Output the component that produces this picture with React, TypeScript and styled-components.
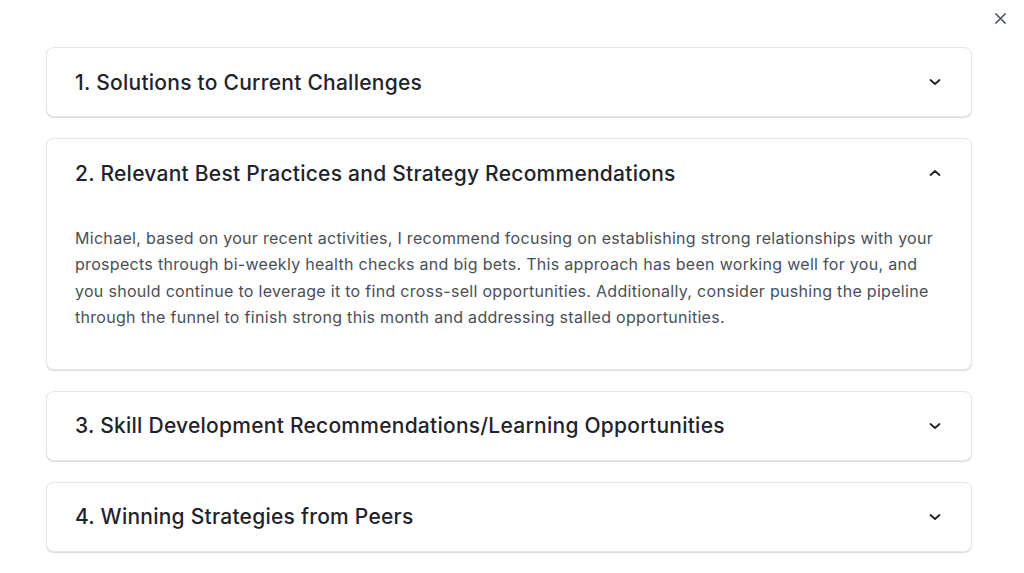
import React, { useState } from "react";
import styled, { createGlobalStyle } from "styled-components";

const GlobalStyle = createGlobalStyle`
	html, body {
		margin: 0;
		padding: 0;
		background: #ffffff;
		overflow: hidden;
	}
	body {
		font-family: "Inter", "Noto Sans", sans-serif;
		-webkit-font-smoothing: antialiased;
	}
`;

const Modal = styled.div`
	position: relative;
	width: 1024px;
	height: 573px;
	box-sizing: border-box;
	padding: 47px 52px 0 46px;
	overflow: hidden;
`;

const CloseButton = styled.button`
	position: absolute;
	top: 8px;
	right: 14px;
	width: 20px;
	height: 20px;
	padding: 0;
	border: none;
	background: transparent;
	color: #555b63;
	display: flex;
	align-items: center;
	justify-content: center;
	cursor: pointer;
`;

const List = styled.div`
	display: flex;
	flex-direction: column;
	gap: 21px;
`;

const Card = styled.section`
	background: #fff;
	border: 1px solid #e6e7ea;
	border-radius: 8px;
	box-shadow: 0 1px 0 #dedfe3, 0 1px 3px rgba(16, 24, 40, 0.05);
`;

const Header = styled.button`
	width: 100%;
	height: 68px;
	box-sizing: border-box;
	padding: 0 30px 0 28px;
	display: flex;
	align-items: center;
	justify-content: space-between;
	border: none;
	background: transparent;
	cursor: pointer;
	text-align: left;
`;

const Title = styled.h3`
	margin: 0;
	font-family: "Inter", sans-serif;
	font-size: 21px;
	font-weight: 500;
	letter-spacing: 0.25px;
	color: #1f232b;
`;

const Chevron = styled.span<{ $open: boolean }>`
	display: flex;
	color: #1f232b;
	transform: rotate(${(p) => (p.$open ? "180deg" : "0deg")});
`;

const Body = styled.div`
	padding: 18px 28px 38px 28px;
	font-family: "Inter", sans-serif;
	font-size: 16px;
	line-height: 26.4px;
	color: #4a4f57;
	letter-spacing: 0.3px;
`;

const sections = [
	{ title: "1. Solutions to Current Challenges", body: "" },
	{
		title: "2. Relevant Best Practices and Strategy Recommendations",
		body: "Michael, based on your recent activities, I recommend focusing on establishing strong relationships with your prospects through bi-weekly health checks and big bets. This approach has been working well for you, and you should continue to leverage it to find cross-sell opportunities. Additionally, consider pushing the pipeline through the funnel to finish strong this month and addressing stalled opportunities.",
	},
	{ title: "3. Skill Development Recommendations/Learning Opportunities", body: "" },
	{ title: "4. Winning Strategies from Peers", body: "" },
	{ title: "5. Upcoming Priorities", body: "" },
];

export default function App() {
	const [open, setOpen] = useState(1);

	return (
		<>
			<GlobalStyle />
			<Modal>
				<CloseButton aria-label="Close">
					<svg width="13" height="13" viewBox="0 0 14 14" fill="none" stroke="currentColor" strokeWidth="1.6" strokeLinecap="round">
						<path d="M2 2l10 10M12 2L2 12" />
					</svg>
				</CloseButton>
				<List>
					{sections.map((s, i) => (
						<Card key={s.title}>
							<Header onClick={() => setOpen(open === i ? -1 : i)}>
								<Title>{s.title}</Title>
								<Chevron $open={open === i}>
									<svg width="12" height="8" viewBox="0 0 12 8" fill="none" stroke="currentColor" strokeWidth="1.8" strokeLinecap="round" strokeLinejoin="round">
										<path d="M1.5 2l4.5 4 4.5-4" />
									</svg>
								</Chevron>
							</Header>
							{open === i && s.body && <Body>{s.body}</Body>}
						</Card>
					))}
				</List>
			</Modal>
		</>
	);
}
